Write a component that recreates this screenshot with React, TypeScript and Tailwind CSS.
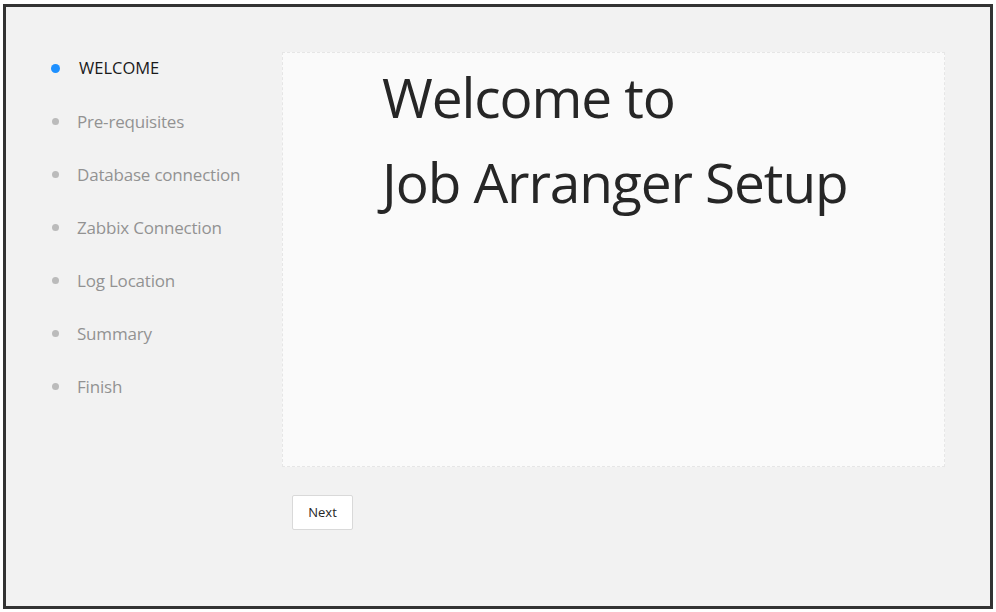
import React from "react";

const steps = [
  "Pre-requisites",
  "Database connection",
  "Zabbix Connection",
  "Log Location",
  "Summary",
  "Finish",
];

export default function App() {
  return (
    <div className="w-[996px] h-[612px] bg-white pl-[3px] pt-[4px] font-['Open_Sans',sans-serif]">
      <div className="w-[990px] h-[605px] border-[3px] border-[#333333] bg-[#f2f2f2] flex">
        <ul className="w-[276px] shrink-0 pl-[44px] pt-[35px]">
          <li className="h-[53px] flex items-center">
            <span className="w-[10px] flex justify-center">
              <span className="w-[9px] h-[9px] rounded-full bg-[#1e90ff]" />
            </span>
            <span className="ml-[19px] text-[16.5px] text-[#1a1a1a]">WELCOME</span>
          </li>
          {steps.map((s) => (
            <li key={s} className="h-[53px] flex items-center">
              <span className="w-[10px] flex justify-center">
                <span className="w-[7px] h-[7px] rounded-full bg-[#bbbbbb]" />
              </span>
              <span className="ml-[17px] text-[17px] text-[#929292] tracking-[-0.2px]">{s}</span>
            </li>
          ))}
        </ul>
        <div className="flex flex-col pt-[45px]">
          <div className="w-[663px] h-[415px] bg-[#fafafa] border border-dashed border-[#e6e6e6] pl-[99px] pt-[1px]">
            <h1 className="text-[55px] leading-[85px] tracking-[-1.1px] text-[#262626] font-normal">
              Welcome to
              <br />
              Job Arranger Setup
            </h1>
          </div>
          <div className="mt-[28px] ml-[10px]">
            <button className="w-[61px] h-[35px] pt-[1px] bg-white border border-[#d9d9d9] rounded-[2px] text-[13px] text-[#262626]">
              Next
            </button>
          </div>
        </div>
      </div>
    </div>
  );
}
